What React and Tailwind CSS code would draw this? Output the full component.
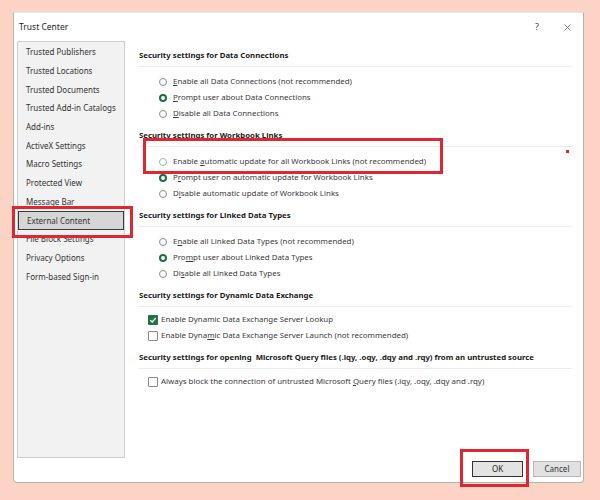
import { X } from "lucide-react";

const sidebarItems = [
  "Trusted Publishers",
  "Trusted Locations",
  "Trusted Documents",
  "Trusted Add-in Catalogs",
  "Add-ins",
  "ActiveX Settings",
  "Macro Settings",
  "Protected View",
  "Message Bar",
  "External Content",
  "File Block Settings",
  "Privacy Options",
  "Form-based Sign-in",
];

// label parts: [before, underlined, after]
const sections = [
  {
    title: "Security settings for Data Connections",
    kind: "radio",
    options: [
      { label: ["", "E", "nable all Data Connections (not recommended)"] },
      { label: ["", "P", "rompt user about Data Connections"], on: true },
      { label: ["", "D", "isable all Data Connections"] },
    ],
  },
  {
    title: "Security settings for Workbook Links",
    kind: "radio",
    options: [
      { label: ["Enable ", "a", "utomatic update for all Workbook Links (not recommended)"], focus: true },
      { label: ["P", "r", "ompt user on automatic update for Workbook Links"], on: true },
      { label: ["D", "i", "sable automatic update of Workbook Links"] },
    ],
  },
  {
    title: "Security settings for Linked Data Types",
    kind: "radio",
    options: [
      { label: ["E", "n", "able all Linked Data Types (not recommended)"] },
      { label: ["Pro", "m", "pt user about Linked Data Types"], on: true },
      { label: ["Di", "s", "able all Linked Data Types"] },
    ],
  },
  {
    title: "Security settings for Dynamic Data Exchange",
    kind: "check",
    options: [
      { label: ["Enable Dynamic Data Exchange Server Lookup", "", ""], on: true },
      { label: ["Enable Dyna", "m", "ic Data Exchange Server Launch (not recommended)"] },
    ],
  },
  {
    title: "Security settings for opening  Microsoft Query files (.iqy, .oqy, .dqy and .rqy) from an untrusted source",
    kind: "check",
    options: [
      { label: ["Always block the connection of untrusted Microsoft ", "Q", "uery files (.iqy, .oqy, .dqy and .rqy)"] },
    ],
  },
];

function Radio({ on, focus }) {
  if (on) {
    return <span className="w-[8px] h-[8px] rounded-full border-[2.5px] border-[#1d6b3f] bg-white shrink-0" />;
  }
  return (
    <span
      className={
        "w-[8px] h-[8px] rounded-full border bg-white shrink-0 " +
        (focus ? "border-[#8fbf98]" : "border-[#8a8a8a]")
      }
    />
  );
}

function Check({ on }) {
  if (on) {
    return (
      <span className="w-[10px] h-[10px] rounded-[1px] bg-[#1f7244] flex items-center justify-center shrink-0">
        <svg width="8" height="8" viewBox="0 0 8 8">
          <path d="M1.3 4.2 L3.2 6 L6.8 2" fill="none" stroke="white" strokeWidth="1.3" />
        </svg>
      </span>
    );
  }
  return <span className="w-[10px] h-[10px] rounded-[1px] border border-[#8a8a8a] bg-white shrink-0" />;
}

function Label({ parts }) {
  return (
    <span className="whitespace-nowrap">
      {parts[0]}
      {parts[1] && <span className="underline underline-offset-1">{parts[1]}</span>}
      {parts[2]}
    </span>
  );
}

export default function App() {
  return (
    <div
      className="relative w-[600px] h-[500px] bg-[#fdd3c6] pt-[12px] pl-[13px] overflow-hidden"
      style={{ fontFamily: '"Noto Sans", "Open Sans", sans-serif' }}
    >
      <div className="w-[571px] h-[471px] bg-white border border-[#a3bea6] border-t-[#e8e8e8] rounded-b-[4px] flex flex-col">
        {/* title bar */}
        <div className="h-[28px] flex items-center pl-[5px] pr-[10px] text-[8.5px] text-[#222]">
          <span>Trust Center</span>
          <span className="ml-auto mr-[23px] text-[9px] text-[#444]">?</span>
          <X size={11} strokeWidth={1.3} className="text-[#333]" />
        </div>

        {/* body */}
        <div className="h-[417px] flex">
          <div className="ml-[3px] w-[108px] h-full bg-[#f2f2f2] border border-[#cfcfcf] pt-px flex flex-col text-[8px] text-[#333]">
            {sidebarItems.map((item) =>
              item === "External Content" ? (
                <div
                  key={item}
                  className="h-[18.7px] flex items-center pl-[8px] bg-[#d6d6d6] border-[1.5px] border-[#3a3a3a]"
                >
                  {item}
                </div>
              ) : (
                <div key={item} className="h-[18.7px] flex items-center pl-[8px]">
                  {item}
                </div>
              )
            )}
          </div>

          <div className="ml-[14px] w-[433px] pt-[7px] flex flex-col gap-[6.5px]">
            {sections.map((s) => (
              <div key={s.title} className="flex flex-col">
                <div className="h-[16px] flex items-center text-[7.8px] font-bold text-[#1a1a1a] whitespace-pre">
                  {s.title}
                </div>
                <div className="h-px bg-[#ececec] mt-[1.5px]" />
                <div className={"flex flex-col text-[7.9px] text-[#3a3a3a] " + (s.kind === "radio" ? "mt-[7px] pl-[20px]" : "mt-[5px] pl-[9px]")}>
                  {s.options.map((o, i) => (
                    <div key={i} className={"h-[16px] flex items-center " + (s.kind === "radio" ? "gap-[6px]" : "gap-[3px]")}>
                      {s.kind === "radio" ? <Radio on={o.on} focus={o.focus} /> : <Check on={o.on} />}
                      <Label parts={o.label} />
                    </div>
                  ))}
                </div>
              </div>
            ))}
          </div>
        </div>

        {/* footer */}
        <div className="pt-[3px] flex justify-end gap-[10px] pr-[2px]">
          <button className="w-[51px] h-[16px] bg-[#e3e3e3] border-[1.5px] border-[#333] text-[8px] text-[#222] flex items-center justify-center">
            OK
          </button>
          <button className="w-[48px] h-[16px] bg-[#e1e1e1] border border-[#b8b8b8] text-[8px] text-[#333] flex items-center justify-center">
            Cancel
          </button>
        </div>
      </div>

      {/* annotation boxes drawn over the screenshot */}
      <div className="absolute left-[12px] top-[206px] w-[121px] h-[32px] border-[3px] border-[#e02630]" />
      <div className="absolute left-[143px] top-[138px] w-[300px] h-[36px] border-[3px] border-[#e02630]" />
      <div className="absolute left-[460px] top-[449px] w-[69px] h-[38px] border-[3px] border-[#e02630]" />
      <div className="absolute left-[566px] top-[150px] w-[3px] h-[3px] bg-[#e02630]" />
    </div>
  );
}
